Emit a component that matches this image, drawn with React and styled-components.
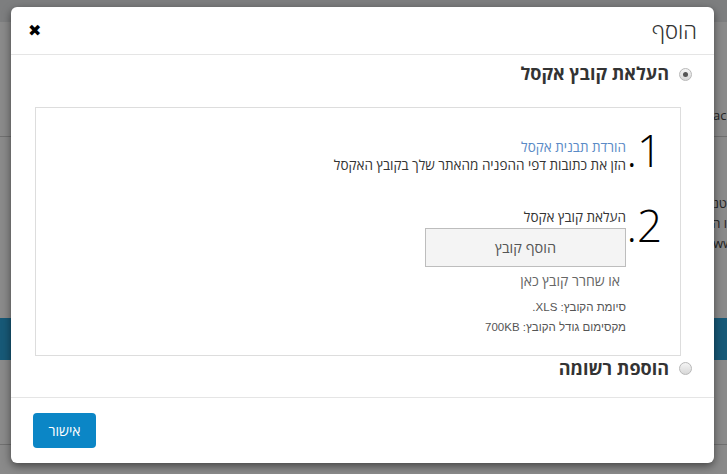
import React from 'react'
import styled, { createGlobalStyle } from 'styled-components'

const Global = createGlobalStyle`
  html, body { margin: 0; padding: 0; }
  body {
    width: 727px;
    height: 474px;
    overflow: hidden;
    font-family: "Open Sans", "Liberation Sans", Arial, sans-serif;
    background: #fff;
  }
`

const Page = styled.div`
  position: relative;
  width: 727px;
  height: 474px;
  overflow: hidden;
  background: #fbfbfb;
  display: flex;
  flex-direction: column;
`

const TopBar = styled.div`
  height: 22px;
  background: #e3e5e8;
`

const PageSection = styled.div`
  height: ${p => p.h}px;
  border-bottom: ${p => (p.line ? '1px solid #ccc' : 'none')};
  display: flex;
  flex-direction: column;
  align-items: flex-end;
  padding-top: ${p => p.pt || 0}px;
  box-sizing: border-box;
  font-size: 13px;
  color: #444;
  line-height: 20px;
`

const BgText = styled.div`
  width: 14px;
  overflow: hidden;
  white-space: nowrap;
  direction: ${p => (p.rtl ? 'rtl' : 'ltr')};
`

const BlueBand = styled.div`
  height: 42px;
  background: #2aa3d9;
`

const Backdrop = styled.div`
  position: absolute;
  inset: 0;
  background: rgba(0, 0, 0, 0.45);
`

const Modal = styled.div`
  position: absolute;
  top: 7px;
  left: 11px;
  width: 703px;
  height: 456px;
  background: #fff;
  border-radius: 6px;
  box-shadow: 0 3px 9px rgba(0, 0, 0, 0.5);
  direction: rtl;
  display: flex;
  flex-direction: column;
  overflow: hidden;
`

const Header = styled.div`
  height: 48px;
  border-bottom: 1px solid #e5e5e5;
  display: flex;
  align-items: center;
  justify-content: space-between;
  padding: 0 17px 0 17px;
  box-sizing: border-box;
`

const Title = styled.h4`
  margin: 0;
  font-size: 22px;
  font-weight: 300;
  color: #333;
  margin-top: -2px;
`

const Close = styled.button`
  border: none;
  background: none;
  padding: 0;
  font-family: "DejaVu Sans", sans-serif;
  font-size: 16px;
  font-weight: bold;
  color: #000;
  line-height: 1;
  cursor: pointer;
`

const Body = styled.div`
  flex: 1;
  padding: 4px 22px 0 24px;
  display: flex;
  flex-direction: column;
`

const RadioRow = styled.label`
  display: flex;
  align-items: flex-start;
  gap: 10px;
  height: ${p => p.h}px;
  font-size: 18px;
  font-weight: bold;
  color: #333;
`

const RadioLabel = styled.span`
  margin-top: ${p => p.mt || 0}px;
  line-height: 24px;
`

const Radio = styled.span`
  width: 11px;
  height: 11px;
  border-radius: 50%;
  border: 1px solid #b8b8b8;
  background: linear-gradient(#f4f4f4, #d8d8d8);
  display: flex;
  align-items: center;
  justify-content: center;
  margin-top: ${p => p.mt || 0}px;

  &::after {
    content: '';
    width: 5px;
    height: 5px;
    border-radius: 50%;
    background: ${p => (p.checked ? '#555' : 'transparent')};
  }
`

const UploadBox = styled.div`
  margin-right: 11px;
  height: 249px;
  border: 1px solid #ddd;
  box-sizing: border-box;
  padding: 20px 18px 0 0;
  display: flex;
  flex-direction: column;
  gap: 29px;
`

const Step = styled.div`
  display: flex;
  align-items: flex-start;
`

const Num = styled.div`
  width: 36px;
  font-size: 44px;
  font-weight: 300;
  line-height: 44px;
  color: #000;
  text-align: right;
  white-space: nowrap;
`

const StepContent = styled.div`
  display: flex;
  flex-direction: column;
  padding-top: ${p => p.pt || 0}px;
  font-size: 13.5px;
  line-height: 18px;
  color: #333;
`

const TemplateLink = styled.a`
  color: #5a8ac6;
  text-decoration: none;
`

const AddFileButton = styled.div`
  margin-top: 2px;
  width: 201px;
  height: 39px;
  box-sizing: border-box;
  background: #f4f4f4;
  border: 1px solid #bdbdbd;
  display: flex;
  align-items: center;
  justify-content: center;
  color: #555;
  font-size: 14.5px;
`

const DropHint = styled.div`
  margin: 4px 6px 0 0;
  color: #666;
  font-size: 14px;
  line-height: 20px;
`

const Info = styled.div`
  margin-top: ${p => p.mt || 0}px;
  font-family: "Liberation Sans", Arial, sans-serif;
  font-size: 11.5px;
  line-height: 20px;
  color: #555;
`

const Footer = styled.div`
  height: 65px;
  border-top: 1px solid #e5e5e5;
  display: flex;
  align-items: center;
  justify-content: flex-end;
  padding: 0 22px;
`

const OkButton = styled.button`
  width: 63px;
  height: 35px;
  border: none;
  border-radius: 4px;
  background: #0b86c6;
  color: #fff;
  font-family: "Open Sans", "Liberation Sans", sans-serif;
  font-size: 14px;
  cursor: pointer;
`

export default function App() {
  return (
    <Page>
      <Global />
      <TopBar />
      <PageSection h={115} pt={83} line>
        <BgText>ack</BgText>
      </PageSection>
      <PageSection h={181} pt={56}>
        <BgText rtl>טנט</BgText>
        <BgText rtl>ו הה</BgText>
        <BgText>www</BgText>
      </PageSection>
      <BlueBand />
      <PageSection h={85} line />
      <Backdrop />
      <Modal>
        <Header>
          <Title>הוסף</Title>
          <Close>✖</Close>
        </Header>
        <Body>
          <RadioRow h={48}>
            <Radio checked mt={9} />
            <RadioLabel mt={2}>העלאת קובץ אקסל</RadioLabel>
          </RadioRow>
          <UploadBox>
            <Step>
              <Num>1.</Num>
              <StepContent pt={10}>
                <TemplateLink href="#">הורדת תבנית אקסל</TemplateLink>
                <span>הזן את כתובות דפי ההפניה מהאתר שלך בקובץ האקסל</span>
              </StepContent>
            </Step>
            <Step>
              <Num>2.</Num>
              <StepContent pt={5}>
                <span>העלאת קובץ אקסל</span>
                <AddFileButton>הוסף קובץ</AddFileButton>
                <DropHint>או שחרר קובץ כאן</DropHint>
                <Info mt={6}>סיומת הקובץ: XLS.</Info>
                <Info>מקסימום גודל הקובץ: 700KB</Info>
              </StepContent>
            </Step>
          </UploadBox>
          <RadioRow h={34}>
            <Radio mt={6} />
            <RadioLabel>הוספת רשומה</RadioLabel>
          </RadioRow>
        </Body>
        <Footer>
          <OkButton>אישור</OkButton>
        </Footer>
      </Modal>
    </Page>
  )
}
